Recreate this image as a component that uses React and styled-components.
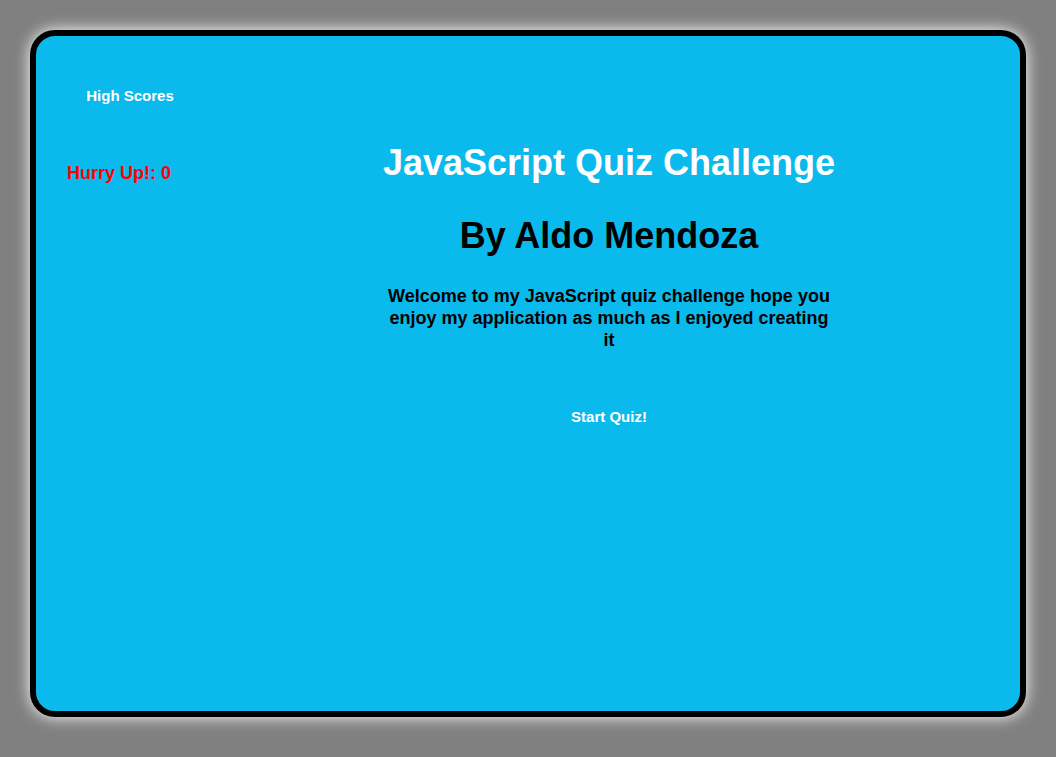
import React, { useState } from "react";
import styled, { createGlobalStyle } from "styled-components";

const GlobalStyle = createGlobalStyle`
  * { box-sizing: border-box; }
  body {
    margin: 0;
    background: #808080;
    font-family: "Franklin Gothic Medium", "Liberation Sans", Arial, sans-serif;
    font-weight: 700;
  }
`;

const Page = styled.div`
  display: flex;
  min-height: 100vh;
  padding: 30px 30px 40px;
`;

const Panel = styled.div`
  flex: 1;
  display: grid;
  grid-template-columns: 126fr 168fr 496fr 132fr;
  align-items: start;
  padding: 48px 31px;
  border: 6px solid #000;
  border-radius: 25px;
  background: #0bbaec;
  box-shadow: 0 0 15px #fff;
`;

const Sidebar = styled.aside`
  grid-column: 1;
  display: flex;
  flex-direction: column;
  gap: 54px;
`;

const Timer = styled.p`
  margin: 0;
  color: #f00;
  font-size: 18px;
  line-height: 22px;
  white-space: nowrap;
`;

const Button = styled.button`
  align-self: center;
  padding: 0;
  border: 0;
  background: transparent;
  color: #fff;
  font: inherit;
  font-size: 15px;
  line-height: 24px;
  white-space: nowrap;
  cursor: pointer;
`;

const Intro = styled.main`
  grid-column: 3;
  display: flex;
  flex-direction: column;
  padding-top: 55px;
  text-align: center;
`;

const Heading = styled.h1`
  margin: 0 0 25px;
  color: ${({ $color }) => $color};
  font-size: 36px;
  line-height: 48px;
  white-space: nowrap;
`;

const Welcome = styled.p`
  align-self: center;
  max-width: 450px;
  margin: 0 0 54px;
  font-size: 18px;
  line-height: 22px;
`;

export default function App() {
  const [seconds] = useState(0);
  return (
    <>
      <GlobalStyle />
      <Page>
        <Panel>
          <Sidebar>
            <Button type="button">High Scores</Button>
            <Timer>Hurry Up!: {seconds}</Timer>
          </Sidebar>
          <Intro>
            <Heading $color="#fff">JavaScript Quiz Challenge</Heading>
            <Heading as="h2" $color="#000">By Aldo Mendoza</Heading>
            <Welcome>
              Welcome to my JavaScript quiz challenge hope you enjoy my
              application as much as I enjoyed creating it
            </Welcome>
            <Button type="button">Start Quiz!</Button>
          </Intro>
        </Panel>
      </Page>
    </>
  );
}
